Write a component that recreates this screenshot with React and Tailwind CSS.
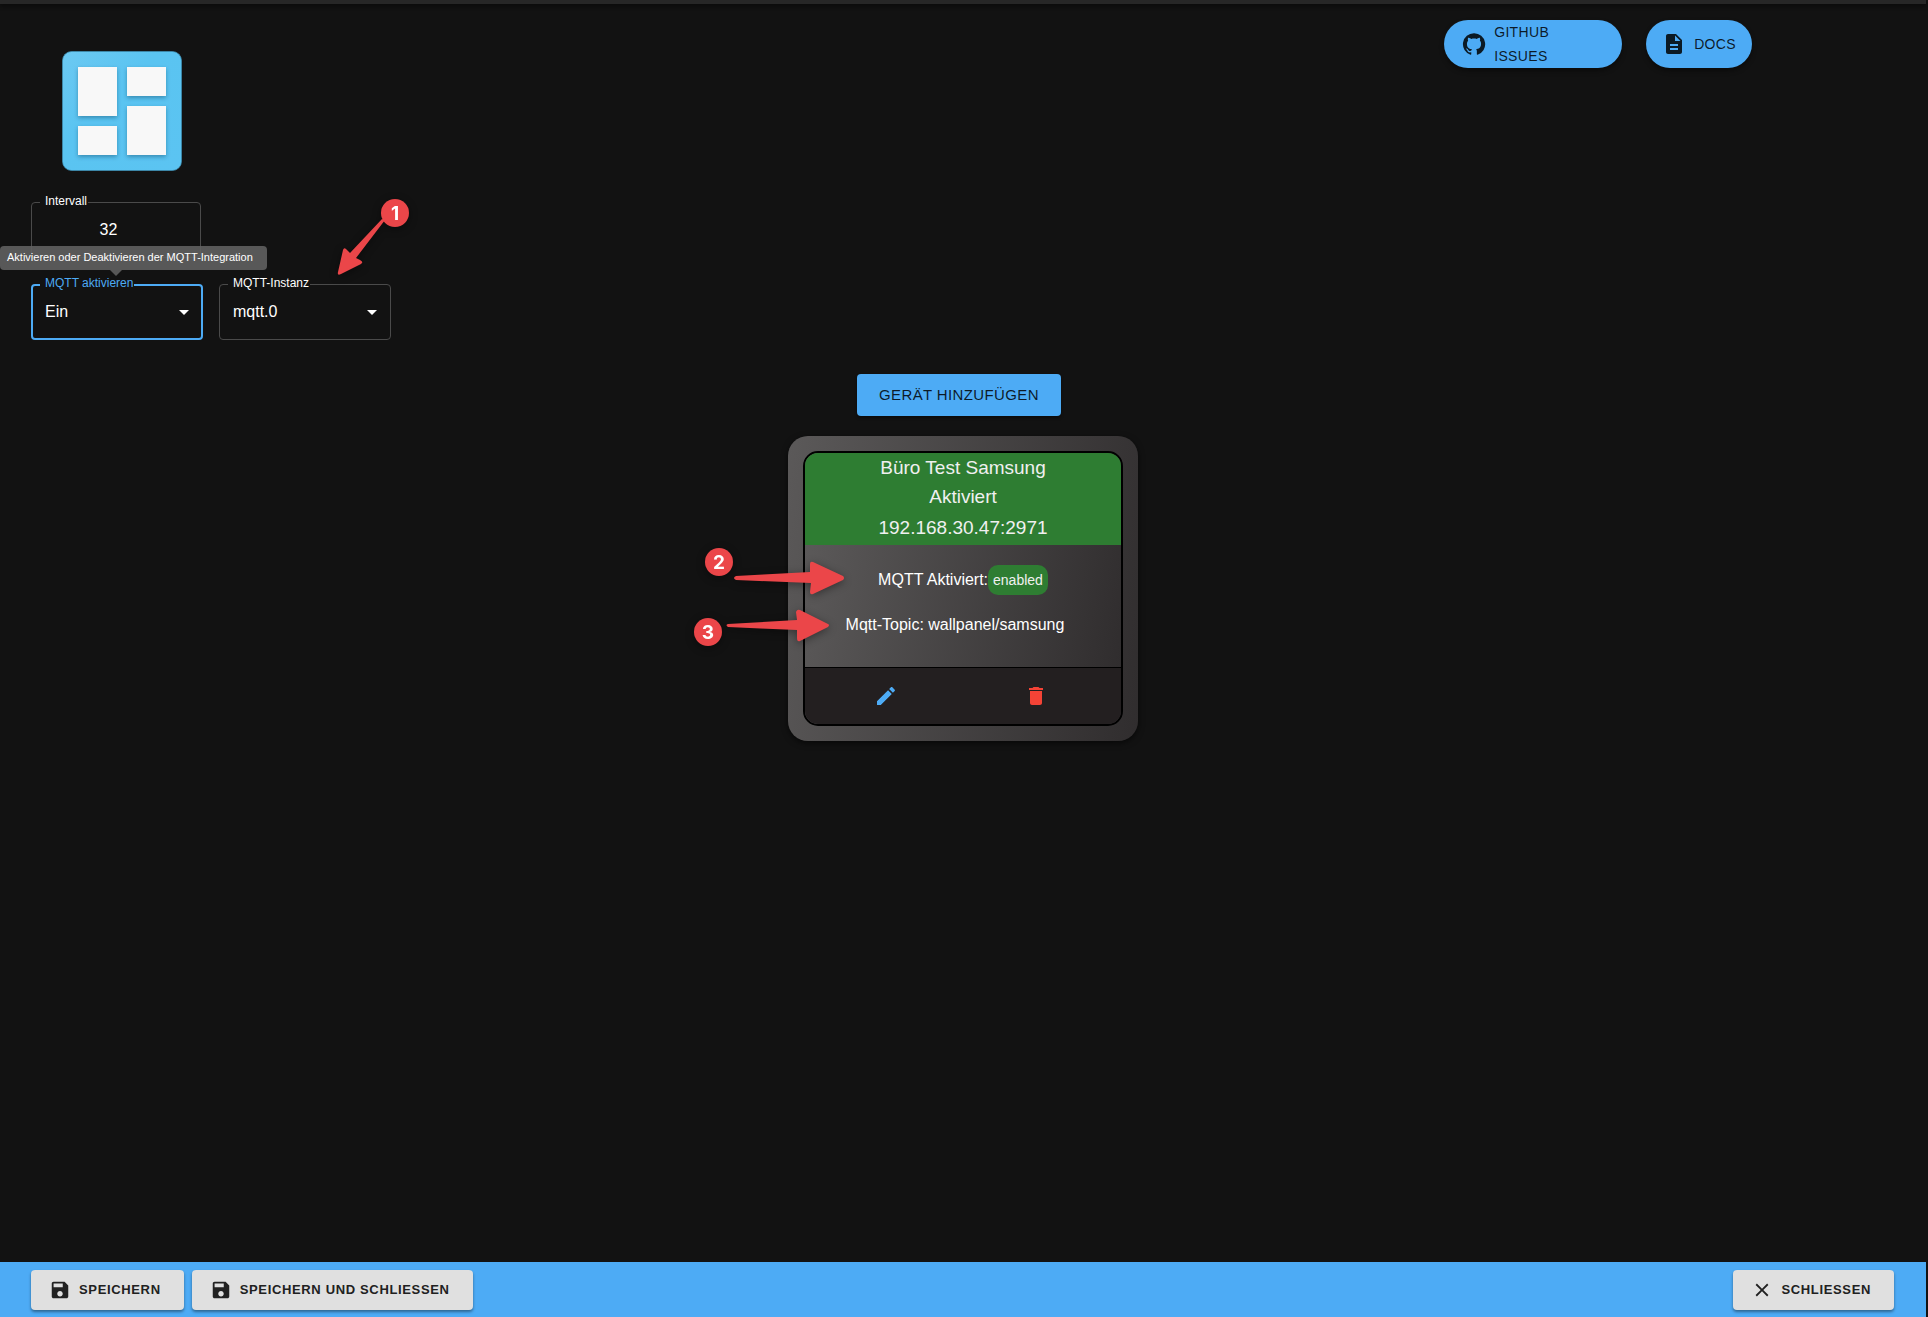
import React from "react";

function Icon({ d, className = "size-6" }) {
  return (
    <svg viewBox="0 0 24 24" fill="currentColor" className={className} aria-hidden="true">
      <path d={d} />
    </svg>
  );
}

const ICONS = {
  github:
    "M12 1.27a11 11 0 00-3.48 21.46c.55.09.73-.28.73-.55v-1.84c-3.03.64-3.67-1.46-3.67-1.46-.55-1.29-1.28-1.65-1.28-1.65-.92-.65.1-.65.1-.65 1.1 0 1.73 1.1 1.73 1.1.92 1.65 2.57 1.2 3.21.92a2 2 0 01.64-1.47c-2.47-.27-5.04-1.19-5.04-5.5 0-1.1.46-2.1 1.2-2.84a3.76 3.76 0 010-2.93s.91-.28 3.11 1.1c1.8-.49 3.7-.49 5.5 0 2.1-1.38 3.02-1.1 3.02-1.1a3.76 3.76 0 01.1 2.93c.83.74 1.2 1.74 1.2 2.94 0 4.21-2.57 5.13-5.04 5.4.45.37.82.92.82 2.02v3.03c0 .27.1.64.73.55A11 11 0 0012 1.27",
  doc: "M14 2H6c-1.1 0-1.99.9-1.99 2L4 20c0 1.1.89 2 1.99 2H18c1.1 0 2-.9 2-2V8l-6-6zm2 16H8v-2h8v2zm0-4H8v-2h8v2zm-3-5V3.5L18.5 9H13z",
  save: "M17 3H5c-1.11 0-2 .9-2 2v14c0 1.1.89 2 2 2h14c1.1 0 2-.9 2-2V7l-4-4zm-5 16c-1.66 0-3-1.34-3-3s1.34-3 3-3 3 1.34 3 3-1.34 3-3 3zm3-10H5V5h10v4z",
  close:
    "M19 6.41L17.59 5 12 10.59 6.41 5 5 6.41 10.59 12 5 17.59 6.41 19 12 13.41 17.59 19 19 17.59 13.41 12z",
  edit: "M3 17.25V21h3.75L17.81 9.94l-3.75-3.75L3 17.25zM20.71 7.04c.39-.39.39-1.02 0-1.41l-2.34-2.34c-.39-.39-1.02-.39-1.41 0l-1.83 1.83 3.75 3.75 1.83-1.83z",
  trash: "M6 19c0 1.1.9 2 2 2h8c1.1 0 2-.9 2-2V7H6v12zM19 4h-3.5l-1-1h-5l-1 1H5v2h14V4z",
  drop: "M7 10l5 5 5-5z",
};

function Logo() {
  return (
    <svg viewBox="0 0 120 120" className="ml-[62px] block size-[120px]" role="img" aria-label="Logo">
      <defs>
        <linearGradient id="logoBg" x1="0" y1="0" x2="1" y2="1">
          <stop offset="0" stopColor="#6cc9f2" />
          <stop offset="0.4" stopColor="#5ac4f1" />
          <stop offset="1" stopColor="#5bc4f2" />
        </linearGradient>
        <filter id="logoShadow" x="-20%" y="-20%" width="140%" height="150%">
          <feDropShadow dx="0" dy="2" stdDeviation="2" floodColor="#0a3a5a" floodOpacity="0.4" />
        </filter>
      </defs>
      <rect x="0.5" y="0.5" width="119" height="119" rx="9" fill="url(#logoBg)" stroke="#3f92b8" strokeWidth="0.7" />
      <g fill="#f8f8f8" filter="url(#logoShadow)">
        <rect x="16" y="16" width="39" height="49" />
        <rect x="65" y="16" width="39" height="29" />
        <rect x="16" y="75" width="39" height="29" />
        <rect x="65" y="55" width="39" height="49" />
      </g>
    </svg>
  );
}

function SelectField({ id, label, options, active }) {
  return (
    <div className="relative w-[172px]">
      <label
        htmlFor={id}
        className={
          active
            ? "absolute -top-[9px] left-[9px] bg-[#121212] pr-px pl-[5px] text-xs text-[#4dabf5]"
            : "absolute -top-[9px] left-[9px] bg-[#121212] pr-px pl-[5px] text-xs text-white"
        }
      >
        {label}
      </label>
      <select
        id={id}
        className={
          active
            ? "h-14 w-full appearance-none rounded border-2 border-[#4dabf5] bg-transparent px-3 text-base text-white outline-none"
            : "h-14 w-full appearance-none rounded border border-[#4a4a4a] bg-transparent px-[13px] text-base text-white outline-none"
        }
      >
        {options.map((o) => (
          <option key={o} className="bg-[#121212]">
            {o}
          </option>
        ))}
      </select>
      <Icon d={ICONS.drop} className="pointer-events-none absolute top-4 right-[7px] size-6 text-white" />
    </div>
  );
}

function ToolbarButton({ icon, iconClass, children }) {
  return (
    <button className="flex h-10 items-center gap-2 rounded bg-[#e0e0e0] pr-[23px] pl-[18px] text-[13px] font-bold tracking-wider text-[#212121] shadow-[0_2px_3px_rgba(0,0,0,0.4)]">
      <Icon d={icon} className={iconClass} />
      {children}
    </button>
  );
}

function Badge({ n, cx, cy }) {
  return (
    <>
      <circle cx={cx} cy={cy} r="14" />
      <text x={cx} y={cy + 7} textAnchor="middle" fill="#fff" className="font-['Inter',sans-serif] text-[19px] font-bold">
        {n}
      </text>
    </>
  );
}

const MARKER = "pointer-events-none absolute fill-[#eb4649] drop-shadow-[0_2px_4px_rgba(0,0,0,0.4)]";

export default function App() {
  return (
    <div className="relative flex min-h-screen flex-col bg-[#121212] pr-0.5 font-['Liberation_Sans',Arial,sans-serif] text-white">
      <div className="h-1 shrink-0 bg-[#272727] shadow-[0_2px_4px_rgba(0,0,0,0.5)]" />

      <header className="flex items-start justify-between pt-4 pr-[174px]">
        <div className="pt-[31px]">
          <Logo />
        </div>
        <nav className="flex gap-6 text-[14px] tracking-wide text-black/85">
          <a
            href="#issues"
            className="flex h-12 w-[178px] items-center gap-2 rounded-full bg-[#4dabf5] pl-[18px] leading-6 shadow-[0_3px_5px_rgba(0,0,0,0.4)]"
          >
            <Icon d={ICONS.github} className="size-6 shrink-0" />
            <span className="w-20">GITHUB ISSUES</span>
          </a>
          <a
            href="#docs"
            className="flex h-12 items-center gap-2 rounded-full bg-[#4dabf5] px-4 leading-6 shadow-[0_3px_5px_rgba(0,0,0,0.4)]"
          >
            <Icon d={ICONS.doc} className="size-6 shrink-0" />
            DOCS
          </a>
        </nav>
      </header>

      <main className="grow">
        <form className="flex flex-col gap-[26px] pt-[31px] pl-[31px]">
          <div className="relative w-[170px]">
            <label htmlFor="interval" className="absolute -top-[9px] left-[9px] bg-[#121212] pr-px pl-[5px] text-xs">
              Intervall
            </label>
            <input
              id="interval"
              defaultValue="32"
              inputMode="numeric"
              className="h-14 w-full rounded border border-[#4a4a4a] bg-transparent pr-7 pl-[13px] text-center text-base outline-none"
            />
          </div>
          <div className="relative flex gap-4">
            <SelectField id="mqtt" label="MQTT aktivieren" options={["Ein", "Aus"]} active />
            <SelectField id="instance" label="MQTT-Instanz" options={["mqtt.0"]} />
            <div
              role="tooltip"
              className="absolute -top-[38px] -left-[31px] rounded bg-[#616161]/90 pr-[14px] pb-0.5 pl-[7px] text-[11px] leading-[22px] whitespace-nowrap"
            >
              Aktivieren oder Deaktivieren der MQTT-Integration
              <svg viewBox="0 0 12 6" className="absolute top-full left-[110px] h-1.5 w-3 fill-[#616161]/90">
                <path d="M0 0h12L6 6z" />
              </svg>
            </div>
          </div>
        </form>

        <section className="mt-[34px] flex flex-col items-center">
          <button className="mr-2 h-[42px] rounded bg-[#4dabf5] px-[22px] text-[15px] tracking-wide text-black/85 shadow-[0_2px_3px_rgba(0,0,0,0.4)]">
            GERÄT HINZUFÜGEN
          </button>

          <article className="relative mt-5 w-[350px] rounded-[20px] bg-linear-[100deg,#5b5959,#302d2e] p-[15px] shadow-[0_2px_6px_rgba(0,0,0,0.6)]">
            <div className="overflow-hidden rounded-[15px] border-2 border-black">
              <div className="flex flex-col bg-[#2e7d32] text-center text-[19px] leading-[30px] text-[#f0f0f0]">
                <h2>Büro Test Samsung</h2>
                <p className="leading-7">Aktiviert</p>
                <p className="leading-[34px]">192.168.30.47:2971</p>
              </div>
              <div className="flex h-[122px] flex-col bg-linear-[100deg,#5b5959,#302d2e] pt-5">
                <div className="flex items-center justify-center text-base">
                  <span>MQTT Aktiviert:</span>
                  <span className="rounded-[10px] bg-[#2e7d32] px-[5px] text-[14px] leading-[30px] text-[#f0f0f0]">
                    enabled
                  </span>
                </div>
                <p className="mt-[18px] mr-4 text-center text-base">Mqtt-Topic: wallpanel/samsung</p>
              </div>
              <div className="flex h-[57px] items-center justify-center gap-[126px] border-t border-black bg-[#231f20] pr-1">
                <button aria-label="Bearbeiten" className="text-[#4dabf5]">
                  <Icon d={ICONS.edit} />
                </button>
                <button aria-label="Löschen" className="text-[#f44336]">
                  <Icon d={ICONS.trash} />
                </button>
              </div>
            </div>

            <svg viewBox="0 0 160 110" className={`${MARKER} top-[106px] -left-[98px] h-[110px] w-[160px]`}>
              <Badge n="2" cx={29} cy={20} />
              <path d="M46 34 L120 30 L120 22 Q120 19 123 20 L153 34 Q155 36 153 38 L123 52 Q120 53 120 50 L121 41 L46 38 Q42 36 46 34Z" />
              <Badge n="3" cx={18} cy={90} />
              <path d="M38 82 L107 78 L106 70 Q107 67 110 68 L138 82 Q140 83 138 85 L110 99 Q107 100 107 96 L107 88 L38 85 Q35 83 38 82Z" />
            </svg>
          </article>
        </section>
      </main>

      <footer className="flex h-[55px] shrink-0 items-start gap-2 bg-[#4dabf5] pt-2 pr-8 pl-[31px]">
        <ToolbarButton icon={ICONS.save} iconClass="size-[22px]">
          SPEICHERN
        </ToolbarButton>
        <ToolbarButton icon={ICONS.save} iconClass="size-[22px]">
          SPEICHERN UND SCHLIESSEN
        </ToolbarButton>
        <div className="ml-auto">
          <ToolbarButton icon={ICONS.close} iconClass="size-[22px]">
            SCHLIESSEN
          </ToolbarButton>
        </div>
      </footer>

      <svg viewBox="0 0 80 90" className={`${MARKER} top-[195px] left-[333px] h-[90px] w-20`}>
        <path d="M49 24 L17 58 L13 54 Q11 52 10 55 L5 77 Q4 81 8 79 L28 69 Q31 67 27 65 L23 63 L52 25Z" />
        <Badge n="1" cx={62} cy={18} />
      </svg>
    </div>
  );
}
